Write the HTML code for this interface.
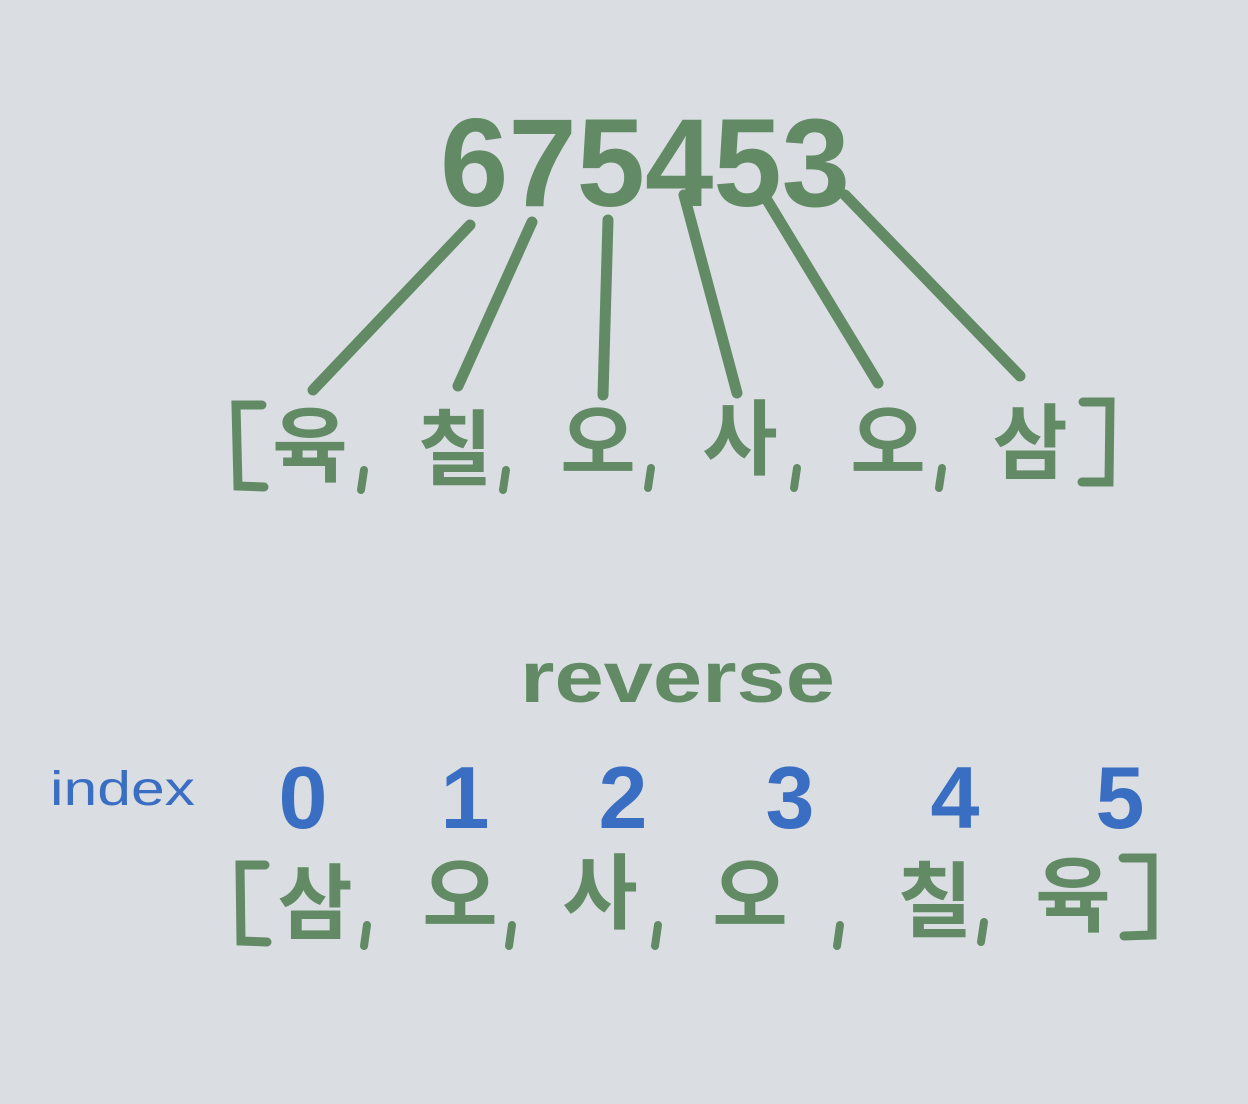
<!DOCTYPE html>
<html><head><meta charset="utf-8"><style>
html,body{margin:0;padding:0;background:#dadee3;}
svg{display:block}
text{font-family:"Liberation Sans","Noto Sans CJK KR",sans-serif;}
</style></head><body>
<svg width="1248" height="1104" viewBox="0 0 1248 1104" xmlns="http://www.w3.org/2000/svg">
<rect width="1248" height="1104" fill="#dadee3"/>
<g fill="#628b65" stroke="none">
<text x="440" y="206" font-size="125" textLength="410" lengthAdjust="spacingAndGlyphs" font-weight="bold">675453</text>
<text x="520" y="702" font-size="72" textLength="315" lengthAdjust="spacingAndGlyphs" font-weight="bold">reverse</text>
</g>
<g stroke="#628b65" stroke-width="11" stroke-linecap="round" fill="none">
<line x1="470" y1="225" x2="313" y2="390"/>
<line x1="532" y1="222" x2="458" y2="386"/>
<line x1="608" y1="220" x2="603" y2="395"/>
<line x1="684" y1="195" x2="737" y2="393"/>
<line x1="767" y1="200" x2="878" y2="383"/>
<line x1="845" y1="195" x2="1020" y2="376"/>
<path d="M262 405 L236 405 L238 486 L264 487" stroke-width="9"/>
<path d="M1083 402 L1110 402 L1109 482 L1082 482" stroke-width="9"/>
<path d="M364 470 L361 490 M506 470 L503 490 M651 468 L648 488 M797 468 L794 488 M942 468 L939 488" stroke-width="8"/>
<path d="M265 865 L240 865 L241 941 L267 942" stroke-width="9"/>
<path d="M1123 858 L1152 858 L1152 935 L1124 936" stroke-width="9"/>
<path d="M367 925 L364 946 M512 925 L509 946 M658 925 L655 946 M840 925 L837 946 M984 922 L981 942" stroke-width="8"/>
</g>
<g fill="#628b65" font-size="82" font-weight="bold" text-anchor="middle">
<text x="310" y="475">육</text>
<text x="455" y="478">칠</text>
<text x="598" y="472">오</text>
<text x="740" y="468">사</text>
<text x="888" y="472">오</text>
<text x="1030" y="472">삼</text>
<text x="315" y="932">삼</text>
<text x="460" y="925">오</text>
<text x="600" y="922">사</text>
<text x="750" y="925">오</text>
<text x="935" y="930">칠</text>
<text x="1073" y="925">육</text>
</g>
<g fill="#3a6ec2" text-anchor="middle">
<text x="50" y="805" font-size="48" text-anchor="start" textLength="145" lengthAdjust="spacingAndGlyphs">index</text>
<text x="303" y="828" font-size="88" font-weight="bold">0</text>
<text x="465" y="828" font-size="88" font-weight="bold">1</text>
<text x="623" y="828" font-size="88" font-weight="bold">2</text>
<text x="790" y="828" font-size="88" font-weight="bold">3</text>
<text x="955" y="828" font-size="88" font-weight="bold">4</text>
<text x="1120" y="828" font-size="88" font-weight="bold">5</text>
</g>
</svg>
</body></html>
